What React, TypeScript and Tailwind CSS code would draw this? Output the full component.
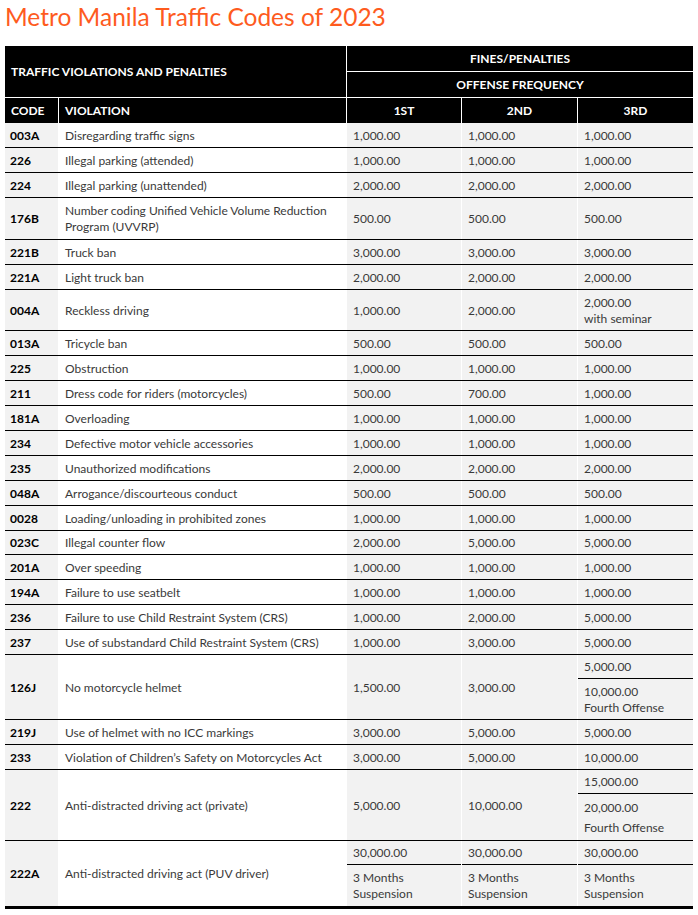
import React from "react";

type Row = { code: string; v: string; f: string[]; h?: string; sub?: string };

const rows: Row[] = [
  { code: "003A", v: "Disregarding traffic signs", f: ["1,000.00", "1,000.00", "1,000.00"] },
  { code: "226", v: "Illegal parking (attended)", f: ["1,000.00", "1,000.00", "1,000.00"] },
  { code: "224", v: "Illegal parking (unattended)", f: ["2,000.00", "2,000.00", "2,000.00"] },
  { code: "176B", v: "Number coding Unified Vehicle Volume Reduction Program (UVVRP)", f: ["500.00", "500.00", "500.00"], h: "min-h-[41px]" },
  { code: "221B", v: "Truck ban", f: ["3,000.00", "3,000.00", "3,000.00"] },
  { code: "221A", v: "Light truck ban", f: ["2,000.00", "2,000.00", "2,000.00"] },
  { code: "004A", v: "Reckless driving", f: ["1,000.00", "2,000.00", "2,000.00"], h: "min-h-[40px]", sub: "with seminar" },
  { code: "013A", v: "Tricycle ban", f: ["500.00", "500.00", "500.00"] },
  { code: "225", v: "Obstruction", f: ["1,000.00", "1,000.00", "1,000.00"] },
  { code: "211", v: "Dress code for riders (motorcycles)", f: ["500.00", "700.00", "1,000.00"] },
  { code: "181A", v: "Overloading", f: ["1,000.00", "1,000.00", "1,000.00"] },
  { code: "234", v: "Defective motor vehicle accessories", f: ["1,000.00", "1,000.00", "1,000.00"] },
  { code: "235", v: "Unauthorized modifications", f: ["2,000.00", "2,000.00", "2,000.00"] },
  { code: "048A", v: "Arrogance/discourteous conduct", f: ["500.00", "500.00", "500.00"] },
  { code: "0028", v: "Loading/unloading in prohibited zones", f: ["1,000.00", "1,000.00", "1,000.00"] },
  { code: "023C", v: "Illegal counter flow", f: ["2,000.00", "5,000.00", "5,000.00"], h: "h-[23px]" },
  { code: "201A", v: "Over speeding", f: ["1,000.00", "1,000.00", "1,000.00"] },
  { code: "194A", v: "Failure to use seatbelt", f: ["1,000.00", "1,000.00", "1,000.00"] },
  { code: "236", v: "Failure to use Child Restraint System (CRS)", f: ["1,000.00", "2,000.00", "5,000.00"] },
  { code: "237", v: "Use of substandard Child Restraint System (CRS)", f: ["1,000.00", "3,000.00", "5,000.00"] },
];

const rowGrid = "grid grid-cols-[53px_287px_114px_115px_115px] gap-x-px bg-white border-b border-black";
const codeCell = "bg-[#f2f2f2] flex items-center pl-[5px] pt-px font-bold text-black";
const vCell = "bg-white flex items-center pl-[6px] pr-2 pt-px text-[#3a3a3a]";
const fCell = "bg-[#f2f2f2] flex items-center pl-[6px] pt-px text-[#3a3a3a]";

function NormalRow({ r }: { r: Row }) {
  return (
    <div className={rowGrid}>
      <div className={`${codeCell} ${r.h ?? "h-6"}`}>{r.code}</div>
      <div className={`${vCell} leading-4`}>{r.v}</div>
      <div className={fCell}>{r.f[0]}</div>
      <div className={fCell}>{r.f[1]}</div>
      <div className={`${fCell} leading-4`}>
        {r.sub ? (
          <div>
            <div>{r.f[2]}</div>
            <div>{r.sub}</div>
          </div>
        ) : (
          r.f[2]
        )}
      </div>
    </div>
  );
}

export default function App() {
  return (
    <div className="bg-white w-[698px] min-h-[915px] text-[12px] font-['Lato','Liberation_Sans',sans-serif]">
      <h1 className="pl-[5px] pt-[3px] h-[46px] text-[24.5px] leading-[28px] text-[#fe5b1e] font-normal">
        Metro Manila Traffic Codes of 2023
      </h1>
      <div className="ml-[5px] w-[688px]">
        {/* Header */}
        <div className="grid grid-cols-[53px_287px_114px_115px_115px] grid-rows-[25px_25px_25px] gap-px bg-white text-white font-bold">
          <div className="col-span-2 row-span-2 bg-black flex items-center pl-[6px] pt-px">
            TRAFFIC VIOLATIONS AND PENALTIES
          </div>
          <div className="col-span-3 bg-black flex items-center justify-center">FINES/PENALTIES</div>
          <div className="col-span-3 bg-black flex items-center justify-center">OFFENSE FREQUENCY</div>
          <div className="bg-black flex items-center pl-[6px] pt-px">CODE</div>
          <div className="bg-black flex items-center pl-[6px] pt-px">VIOLATION</div>
          <div className="bg-black flex items-center justify-center pt-px">1ST</div>
          <div className="bg-black flex items-center justify-center pt-px">2ND</div>
          <div className="bg-black flex items-center justify-center pt-px">3RD</div>
        </div>

        {rows.map((r) => (
          <NormalRow key={r.code} r={r} />
        ))}

        {/* 126J */}
        <div className={rowGrid}>
          <div className={codeCell}>126J</div>
          <div className={vCell}>No motorcycle helmet</div>
          <div className={fCell}>1,500.00</div>
          <div className={fCell}>3,000.00</div>
          <div className="bg-[#f2f2f2] flex flex-col text-[#3a3a3a]">
            <div className="h-6 flex items-center pl-[6px] pt-px border-b border-black">5,000.00</div>
            <div className="pl-[6px] pt-[5px] pb-[3px] leading-4">
              <div>10,000.00</div>
              <div>Fourth Offense</div>
            </div>
          </div>
        </div>

        <NormalRow r={{ code: "219J", v: "Use of helmet with no ICC markings", f: ["3,000.00", "5,000.00", "5,000.00"] }} />
        <NormalRow r={{ code: "233", v: "Violation of Children’s Safety on Motorcycles Act", f: ["3,000.00", "5,000.00", "10,000.00"] }} />

        {/* 222 */}
        <div className={rowGrid}>
          <div className={codeCell}>222</div>
          <div className={vCell}>Anti-distracted driving act (private)</div>
          <div className={fCell}>5,000.00</div>
          <div className={fCell}>10,000.00</div>
          <div className="bg-[#f2f2f2] flex flex-col text-[#3a3a3a]">
            <div className="h-6 flex items-center pl-[6px] pt-px border-b border-black">15,000.00</div>
            <div className="pl-[6px] pt-[4px] pb-[2px] leading-5">
              <div>20,000.00</div>
              <div>Fourth Offense</div>
            </div>
          </div>
        </div>

        {/* 222A */}
        <div className="grid grid-cols-[53px_287px_114px_115px_115px] gap-x-px bg-white border-b-[3px] border-black">
          <div className={codeCell}>222A</div>
          <div className={vCell}>Anti-distracted driving act (PUV driver)</div>
          {[0, 1, 2].map((i) => (
            <div key={i} className="bg-[#f2f2f2] flex flex-col text-[#3a3a3a]">
              <div className="h-6 flex items-center pl-[6px] pt-px border-b border-black">30,000.00</div>
              <div className="pl-[6px] pt-[5px] pb-[4px] leading-4">
                <div>3 Months</div>
                <div>Suspension</div>
              </div>
            </div>
          ))}
        </div>
      </div>
    </div>
  );
}
